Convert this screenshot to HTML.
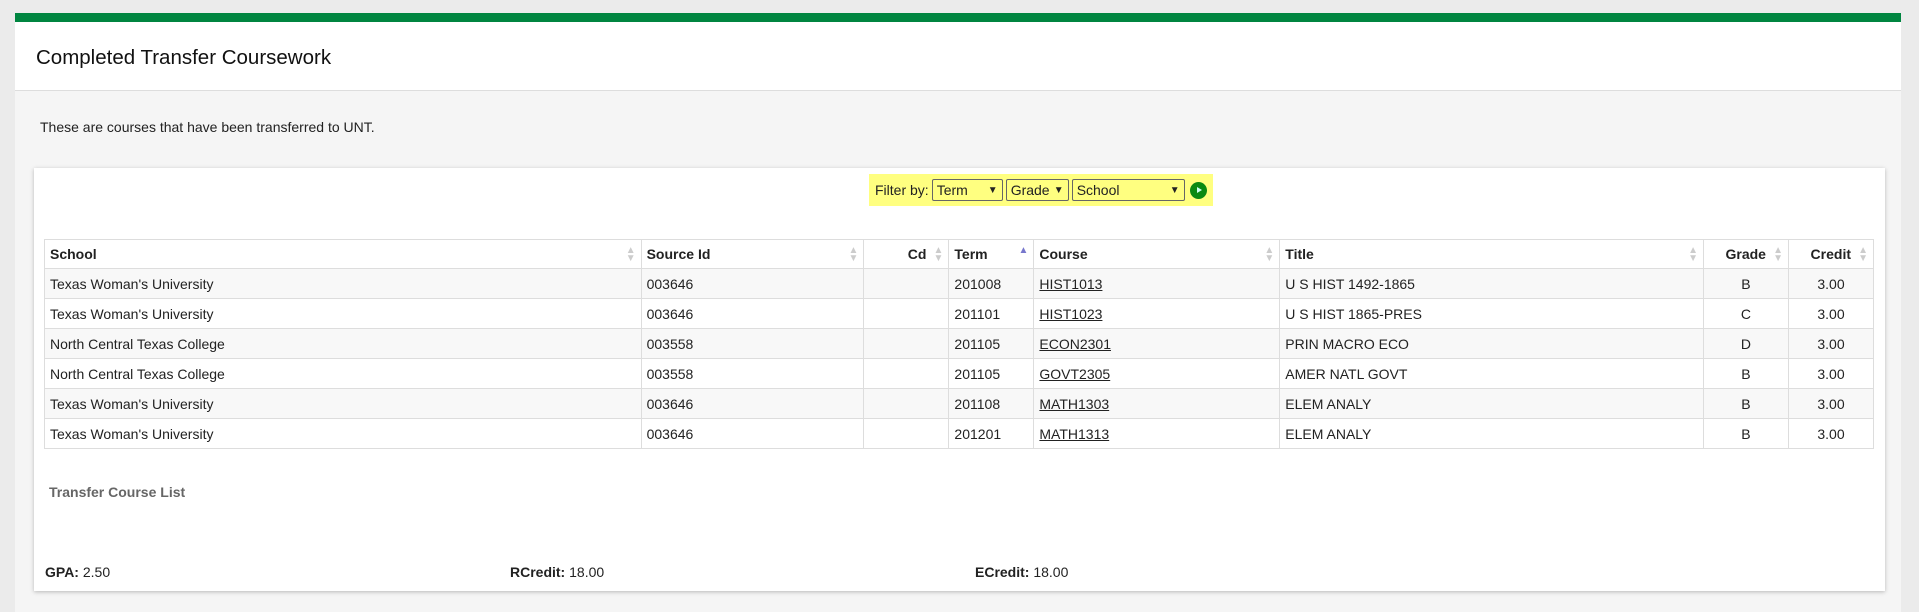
<!DOCTYPE html>
<html><head><meta charset="utf-8"><style>
*{box-sizing:border-box;margin:0;padding:0}
body{width:1919px;height:612px;background:#ebebeb;font-family:"Liberation Sans",sans-serif;color:#222;position:relative;overflow:hidden}
.green{position:absolute;left:15px;top:13px;width:1886px;height:9px;background:#008540}
.head{position:absolute;left:15px;top:22px;width:1886px;height:69px;background:#fff;border-bottom:1px solid #ddd}
.head h1{position:absolute;left:21px;top:24px;font-size:20.5px;font-weight:normal;color:#111}
.content{position:absolute;left:15px;top:91px;width:1886px;height:521px;background:#f5f5f5}
.intro{position:absolute;left:40px;top:119px;font-size:14px}
.card{position:absolute;left:34px;top:168px;width:1851px;height:423px;background:#fff;box-shadow:0 1px 4px rgba(0,0,0,.25)}
.filter{position:absolute;left:869px;top:174px;width:344px;height:32px;background:#ffff80;font-size:14px;display:flex;align-items:center;padding-left:6px;gap:3px}
.sel{height:22px;border:1px solid #666;background:#ffff80;font-size:14px;display:flex;align-items:center;justify-content:space-between;padding:0 4px;border-radius:2px}
.sel span.c{font-size:10px}
.go{width:17px;height:17px;border-radius:50%;background:#0a8a12;margin-left:2px;position:relative}
.go:after{content:"";position:absolute;left:7px;top:5px;border-left:5px solid #cfe;border-top:3.5px solid transparent;border-bottom:3.5px solid transparent}
table{position:absolute;left:44px;top:239px;width:1830px;border-collapse:collapse;font-size:14px}
th,td{border:1px solid #ddd;height:30px;padding:0 5px;text-align:left;position:relative}
th{height:29px;font-weight:bold}
th .s{position:absolute;right:5px;top:7px;color:#ccc;font-size:10px;line-height:8px}
tr:nth-child(even) td{background:#f8f8f8}
td.c,th.c{text-align:center}
th.r{text-align:right;padding-right:22px}
a{color:#222;text-decoration:underline}
.tcl{position:absolute;left:49px;top:484px;font-size:14px;font-weight:bold;color:#666}
.ft{position:absolute;top:564px;font-size:14px}
</style></head><body>
<div class="green"></div>
<div class="head"><h1>Completed Transfer Coursework</h1></div>
<div class="content"></div>
<div class="intro">These are courses that have been transferred to UNT.</div>
<div class="card"></div>
<div class="filter">Filter by: <div class="sel" style="width:71px">Term <span class="c">▼</span></div><div class="sel" style="width:63px">Grade<span class="c">▼</span></div><div class="sel" style="width:113px">School <span class="c">▼</span></div><div class="go"></div></div>
<table>
<colgroup><col style="width:597px"><col style="width:223px"><col style="width:85px"><col style="width:85px"><col style="width:246px"><col style="width:424px"><col style="width:85px"><col style="width:85px"></colgroup>
<tr><th>School<span class="s">▲<br>▼</span></th><th>Source Id<span class="s">▲<br>▼</span></th><th class="r">Cd<span class="s">▲<br>▼</span></th><th>Term<span class="s" style="color:#77c">▲</span></th><th>Course<span class="s">▲<br>▼</span></th><th>Title<span class="s">▲<br>▼</span></th><th class="r">Grade<span class="s">▲<br>▼</span></th><th class="r">Credit<span class="s">▲<br>▼</span></th></tr>
<tr><td>Texas Woman's University</td><td>003646</td><td></td><td>201008</td><td><a>HIST1013</a></td><td>U S HIST 1492-1865</td><td class="c">B</td><td class="c">3.00</td></tr>
<tr><td>Texas Woman's University</td><td>003646</td><td></td><td>201101</td><td><a>HIST1023</a></td><td>U S HIST 1865-PRES</td><td class="c">C</td><td class="c">3.00</td></tr>
<tr><td>North Central Texas College</td><td>003558</td><td></td><td>201105</td><td><a>ECON2301</a></td><td>PRIN MACRO ECO</td><td class="c">D</td><td class="c">3.00</td></tr>
<tr><td>North Central Texas College</td><td>003558</td><td></td><td>201105</td><td><a>GOVT2305</a></td><td>AMER NATL GOVT</td><td class="c">B</td><td class="c">3.00</td></tr>
<tr><td>Texas Woman's University</td><td>003646</td><td></td><td>201108</td><td><a>MATH1303</a></td><td>ELEM ANALY</td><td class="c">B</td><td class="c">3.00</td></tr>
<tr><td>Texas Woman's University</td><td>003646</td><td></td><td>201201</td><td><a>MATH1313</a></td><td>ELEM ANALY</td><td class="c">B</td><td class="c">3.00</td></tr>
</table>
<div class="tcl">Transfer Course List</div>
<div class="ft" style="left:45px"><b>GPA:</b> 2.50</div>
<div class="ft" style="left:510px"><b>RCredit:</b> 18.00</div>
<div class="ft" style="left:975px"><b>ECredit:</b> 18.00</div>
</body></html>
